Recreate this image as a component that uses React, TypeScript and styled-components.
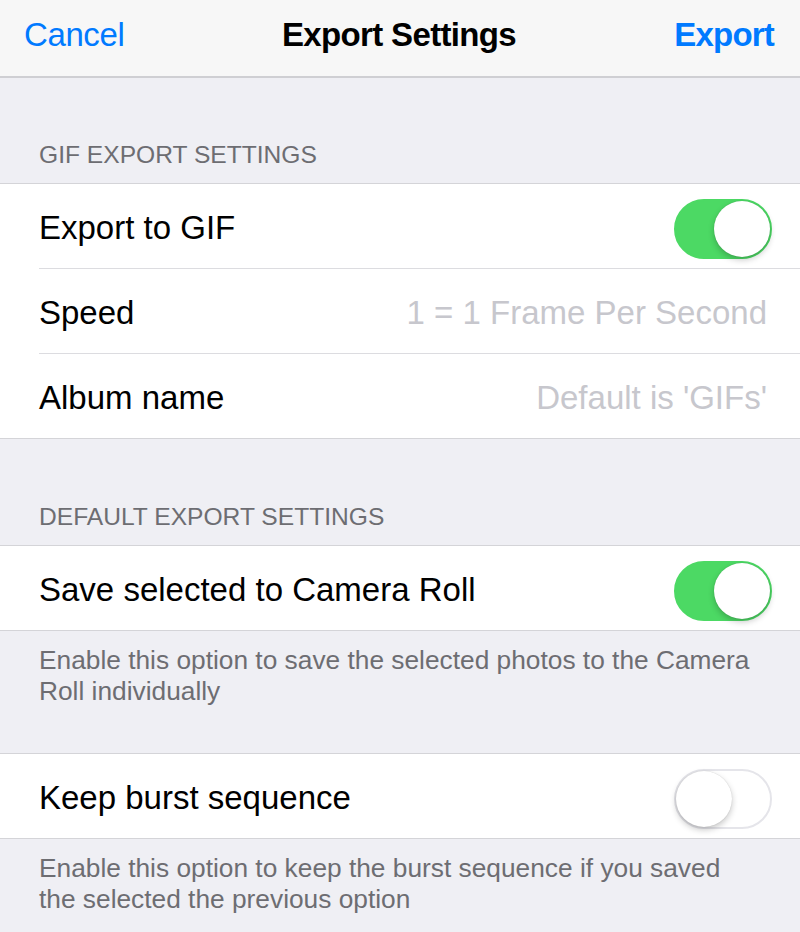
import React, { useState } from "react";
import styled, { createGlobalStyle } from "styled-components";

const GlobalStyle = createGlobalStyle`
  html, body {
    margin: 0;
    padding: 0;
    background: #efeff4;
  }
  body {
    font-family: 'Liberation Sans', Arial, sans-serif;
    -webkit-font-smoothing: antialiased;
  }
`

const Page = styled.div`
  width: 800px;
  min-height: 932px;
  background: #efeff4;
  overflow: hidden;
`

const NavBar = styled.header`
  height: 76px;
  display: grid;
  grid-template-columns: 1fr auto 1fr;
  align-items: center;
  padding: 0 26px 0 24px;
  background: #f7f7f7;
  border-bottom: 2px solid #cfcfd3;
`

const NavButton = styled.button<{ $bold?: boolean; $right?: boolean }>`
  justify-self: ${({ $right }) => ($right ? "end" : "start")};
  padding: 0;
  border: none;
  background: none;
  color: #007aff;
  font-family: inherit;
  font-size: 33px;
  font-weight: ${({ $bold }) => ($bold ? 700 : 400)};
  letter-spacing: ${({ $bold }) => ($bold ? "-0.8px" : "-0.4px")};
  cursor: pointer;
  margin-top: -6px;
`

const NavTitle = styled.h1`
  margin: -6px 0 0;
  font-size: 33px;
  font-weight: 700;
  letter-spacing: -0.65px;
  color: #000;
`

const SectionHeader = styled.div<{ $height: number }>`
  height: ${({ $height }) => $height}px;
  display: flex;
  align-items: flex-end;
  padding: 0 39px 13px;
  box-sizing: border-box;
  font-size: 24.6px;
  line-height: 30px;
  color: #6d6d72;
  text-transform: uppercase;
`

const Group = styled.div`
  background: #fff;
  border-top: 1px solid #d4d4d8;
  border-bottom: 1px solid #d4d4d8;
`

const Row = styled.div`
  height: 84px;
  margin-left: 39px;
  padding-right: 28px;
  display: flex;
  align-items: center;
  justify-content: space-between;
  & + & {
    border-top: 1px solid #dcdce0;
  }
`

const RowLabel = styled.span`
  font-size: 33px;
  color: #000;
  margin-top: 4px;
`

const RowValue = styled.span`
  font-size: 33px;
  color: #c7c7cd;
  margin: 4px 5px 0 0;
`

const Footer = styled.p`
  margin: 0;
  padding: 14px 39px 0;
  font-size: 26.3px;
  line-height: 30.5px;
  color: #6d6d72;
`

const Spacer = styled.div<{ $height: number }>`
  height: ${({ $height }) => $height}px;
`

const SwitchTrack = styled.button<{ $on: boolean }>`
  position: relative;
  width: 98px;
  height: 60px;
  margin-top: 6px;
  padding: 0;
  border-radius: 30px;
  border: 2px solid ${({ $on }) => ($on ? "#4cd964" : "#e5e5ea")};
  background: ${({ $on }) => ($on ? "#4cd964" : "#fff")};
  box-sizing: border-box;
  cursor: pointer;
  transition: background 0.2s;
`

const SwitchKnob = styled.span<{ $on: boolean }>`
  position: absolute;
  top: 0;
  left: ${({ $on }) => ($on ? "38px" : "0")};
  width: 56px;
  height: 56px;
  border-radius: 50%;
  background: #fff;
  box-shadow: 0 3px 6px rgba(0, 0, 0, 0.22), 0 0 1px rgba(0, 0, 0, 0.2);
  transition: left 0.2s;
`

const Switch = ({ initial }: { initial: boolean }) => {
  const [on, setOn] = useState(initial)
  return (
    <SwitchTrack $on={on} onClick={() => setOn(!on)} aria-pressed={on}>
      <SwitchKnob $on={on} />
    </SwitchTrack>
  )
}

export default function App() {
  return (
    <Page>
      <GlobalStyle />
      <NavBar>
        <NavButton>Cancel</NavButton>
        <NavTitle>Export Settings</NavTitle>
        <NavButton $bold $right>Export</NavButton>
      </NavBar>

      <SectionHeader $height={105}>GIF Export Settings</SectionHeader>
      <Group>
        <Row>
          <RowLabel>Export to GIF</RowLabel>
          <Switch initial={true} />
        </Row>
        <Row>
          <RowLabel>Speed</RowLabel>
          <RowValue>1 = 1 Frame Per Second</RowValue>
        </Row>
        <Row>
          <RowLabel>Album name</RowLabel>
          <RowValue>Default is 'GIFs'</RowValue>
        </Row>
      </Group>

      <SectionHeader $height={106}>Default Export Settings</SectionHeader>
      <Group>
        <Row>
          <RowLabel>Save selected to Camera Roll</RowLabel>
          <Switch initial={true} />
        </Row>
      </Group>
      <Footer>Enable this option to save the selected photos to the Camera Roll individually</Footer>

      <Spacer $height={47} />
      <Group>
        <Row>
          <RowLabel>Keep burst sequence</RowLabel>
          <Switch initial={false} />
        </Row>
      </Group>
      <Footer>Enable this option to keep the burst sequence if you saved the selected the previous option</Footer>
    </Page>
  )
}
